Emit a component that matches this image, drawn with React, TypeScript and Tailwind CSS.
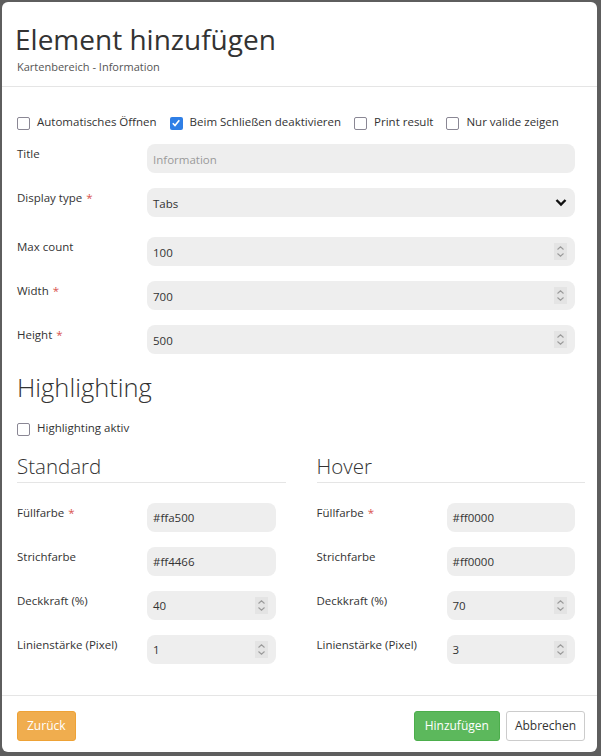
import React from 'react';

const font = { fontFamily: '"Open Sans", "Noto Sans", sans-serif' };

const Spinner = () => (
  <div className="flex h-[17px] w-[13px] shrink-0 items-center justify-center bg-[#e4e4e4]">
    <svg width="9" height="13" viewBox="0 0 9 13" fill="none" stroke="#9a9a9a" strokeWidth="1.1">
      <path d="M1.5 4.5 L4.5 1.8 L7.5 4.5" />
      <path d="M1.5 8.5 L4.5 11.2 L7.5 8.5" />
    </svg>
  </div>
);

const Box = ({ checked = false }: { checked?: boolean }) =>
  checked ? (
    <span className="flex h-[13px] w-[13px] shrink-0 items-center justify-center rounded-[2px] bg-[#2f7fe6]">
      <svg width="10" height="10" viewBox="0 0 10 10" fill="none" stroke="white" strokeWidth="1.6">
        <path d="M1.8 5.2 L4 7.6 L8.3 2.2" />
      </svg>
    </span>
  ) : (
    <span className="h-[13px] w-[13px] shrink-0 rounded-[2px] border-[1.5px] border-[#8a8794] bg-white" />
  );

const Check = ({ label, checked }: { label: string; checked?: boolean }) => (
  <label className="flex items-center gap-[7px] text-[11.5px] text-[#333]">
    <Box checked={checked} />
    <span className="-mt-[3px]">{label}</span>
  </label>
);

const Req = () => <span className="ml-[4px] text-[#d9534f]">*</span>;

type FieldProps = {
  label: string;
  value?: string;
  placeholder?: string;
  required?: boolean;
  number?: boolean;
  select?: boolean;
  className?: string;
};

const Field = ({ label, value, placeholder, required, number, select, className = '' }: FieldProps) => (
  <div className={`flex items-start ${className}`}>
    <div className="w-[130px] shrink-0 pt-[1px] text-[11.5px] text-[#333]">
      {label}
      {required && <Req />}
    </div>
    <div className="flex h-[29px] flex-1 items-center rounded-[8px] bg-[#eeeeee] pl-[6px] pr-[8px] text-[11.5px]">
      <span className={`flex-1 pt-[2px] ${value ? 'text-[#333]' : 'text-[#9a9a9a]'}`}>{value ?? placeholder}</span>
      {number && <Spinner />}
      {select && (
        <svg width="12" height="9" viewBox="0 0 12 9" fill="none" stroke="#111" strokeWidth="2.4">
          <path d="M1.5 2 L6 6.5 L10.5 2" />
        </svg>
      )}
    </div>
  </div>
);

const Column = ({
  title,
  fill,
  stroke,
  opacity,
  width,
}: {
  title: string;
  fill: string;
  stroke: string;
  opacity: string;
  width: string;
}) => (
  <div className="flex flex-1 flex-col">
    <h3 className="h-[29px] text-[20.5px] leading-[26px] font-light text-[#333]">{title}</h3>
    <div className="border-t border-[#e5e5e5]" />
    <div className="mt-[20px] flex flex-col gap-[15px] pr-[10px]">
      <Field label="Füllfarbe" required value={fill} />
      <Field label="Strichfarbe" value={stroke} />
      <Field label="Deckkraft (%)" value={opacity} number />
      <Field label="Linienstärke (Pixel)" value={width} number />
    </div>
  </div>
);

export default function App() {
  return (
    <div className="h-[756px] w-[601px] overflow-hidden bg-[#5e5e5e] pt-[2px] pl-[2px] pr-[4px]" style={font}>
      <div className="flex h-[750px] flex-col rounded-[6px] bg-white">
        <div className="border-b border-[#e5e5e5] pl-[13px] pr-[12px] pt-[18px] pb-[11px]">
          <h1 className="text-[28px] leading-[38px] text-[#333]">Element hinzufügen</h1>
          <p className="mt-[1px] pl-[2px] text-[11px] leading-[16px] text-[#555]">Kartenbereich - Information</p>
        </div>

        <div className="flex-1 pl-[15px] pr-[12px] pt-[29px]">
          <div className="flex items-center gap-[13px]">
            <Check label="Automatisches Öffnen" />
            <Check label="Beim Schließen deaktivieren" checked />
            <Check label="Print result" />
            <Check label="Nur valide zeigen" />
          </div>

          <div className="mt-[14px] flex flex-col pr-[10px]">
            <Field label="Title" placeholder="Information" />
            <Field label="Display type" required value="Tabs" select className="mt-[15px]" />
            <Field label="Max count" value="100" number className="mt-[20px]" />
            <Field label="Width" required value="700" number className="mt-[15px]" />
            <Field label="Height" required value="500" number className="mt-[15px]" />
          </div>

          <h2 className="mt-[16px] text-[25.5px] leading-[34px] font-light text-[#333]">Highlighting</h2>
          <div className="mt-[18px]">
            <Check label="Highlighting aktiv" />
          </div>

          <div className="mt-[16px] flex gap-[31px]">
            <Column title="Standard" fill="#ffa500" stroke="#ff4466" opacity="40" width="1" />
            <Column title="Hover" fill="#ff0000" stroke="#ff0000" opacity="70" width="3" />
          </div>
        </div>

        <div className="flex items-center border-t border-[#e5e5e5] pl-[15px] pr-[12px] pt-[15px] pb-[11px]">
          <button className="h-[30px] rounded-[3px] border border-[#eea236] bg-[#f0ad4e] px-[9px] text-[12px] text-white">
            Zurück
          </button>
          <div className="flex-1" />
          <button className="h-[30px] rounded-[3px] border border-[#4cae4c] bg-[#5cb85c] px-[10px] text-[12px] text-white">
            Hinzufügen
          </button>
          <button className="ml-[6px] h-[30px] rounded-[3px] border border-[#cccccc] bg-white px-[8px] text-[12px] text-[#333]">
            Abbrechen
          </button>
        </div>
      </div>
    </div>
  );
}
